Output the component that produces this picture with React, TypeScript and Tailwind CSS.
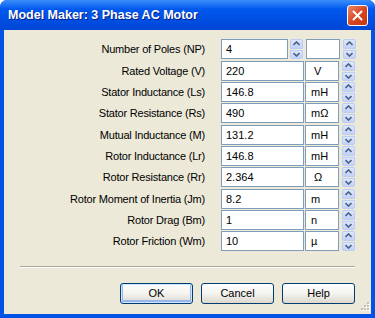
import React from "react";

const FONT = { fontFamily: '"Liberation Sans", Arial, sans-serif' };

function Arrow({ up }: { up: boolean }) {
  return (
    <svg width="7" height="5" viewBox="0 0 7 5" className="block">
      {up ? (
        <path d="M0.5 4 L3.5 1 L6.5 4" fill="none" stroke="#4d6185" strokeWidth="1.6" />
      ) : (
        <path d="M0.5 1 L3.5 4 L6.5 1" fill="none" stroke="#4d6185" strokeWidth="1.6" />
      )}
    </svg>
  );
}

function Spinner() {
  return (
    <div className="flex h-[20px] w-[13px] flex-col gap-[1px]">
      <div className="flex flex-1 items-center justify-center rounded-t-[2px] border border-[#bccdf5] bg-gradient-to-b from-[#dde7fd] to-[#c1d2f8]">
        <Arrow up />
      </div>
      <div className="flex flex-1 items-center justify-center rounded-b-[2px] border border-[#bccdf5] bg-gradient-to-b from-[#dde7fd] to-[#c1d2f8]">
        <Arrow up={false} />
      </div>
    </div>
  );
}

type Row = { label: string; value: string; unit: string; mt: string };

const rows: Row[] = [
  { label: "Number of Poles (NP)", value: "4", unit: "", mt: "mt-0" },
  { label: "Rated Voltage (V)", value: "220", unit: "\u00a0V", mt: "mt-[2px]" },
  { label: "Stator Inductance (Ls)", value: "146.8", unit: "mH", mt: "mt-[1px]" },
  { label: "Stator Resistance (Rs)", value: "490", unit: "m\u03a9", mt: "mt-[1px]" },
  { label: "Mutual Inductance (M)", value: "131.2", unit: "mH", mt: "mt-[2px]" },
  { label: "Rotor Inductance (Lr)", value: "146.8", unit: "mH", mt: "mt-[1px]" },
  { label: "Rotor Resistance (Rr)", value: "2.364", unit: "\u00a0\u03a9", mt: "mt-[1px]" },
  { label: "Rotor Moment of Inertia (Jm)", value: "8.2", unit: "m", mt: "mt-[2px]" },
  { label: "Rotor Drag (Bm)", value: "1", unit: "n", mt: "mt-[1px]" },
  { label: "Rotor Friction (Wm)", value: "10", unit: "\u00b5", mt: "mt-[1px]" },
];

function Field({ children, className }: { children?: React.ReactNode; className: string }) {
  return (
    <div className={`flex h-[20px] items-center border border-[#7f9db9] bg-white text-[11px] text-black ${className}`}>
      {children}
    </div>
  );
}

function Btn({ label, def }: { label: string; def?: boolean }) {
  return (
    <div
      className={`flex h-[21px] w-[73px] items-center justify-center rounded-[3px] border border-[#003c74] bg-gradient-to-b from-[#ffffff] via-[#f3f3ef] to-[#dcd8cc] text-[11px] text-black ${
        def ? "shadow-[inset_0_0_0_1px_#cee7ff,inset_0_-1px_0_2px_#98b4ee]" : ""
      }`}
    >
      {label}
    </div>
  );
}

export default function App() {
  return (
    <div className="h-[318px] w-[375px] overflow-hidden bg-white" style={FONT}>
      <div className="flex h-[318px] w-[375px] flex-col rounded-t-[7px] bg-[#0053e4]">
        {/* title bar */}
        <div className="flex h-[30px] items-center rounded-t-[7px] bg-gradient-to-b from-[#3a8efc] via-[#0058ee] via-30% to-[#0046d6] pl-[8px] pr-[7px]">
          <div
            className="flex-1 pt-[1px] text-[12.5px] font-bold text-white"
            style={{ textShadow: "1px 1px 0 #0a1e84" }}
          >
            Model Maker: 3 Phase AC Motor
          </div>
          <div className="flex h-[21px] w-[21px] items-center justify-center rounded-[3px] border border-white bg-gradient-to-br from-[#e8876b] via-[#d9451e] to-[#c23613]">
            <svg width="11" height="11" viewBox="0 0 11 11">
              <path d="M1.5 1.5 L9.5 9.5 M9.5 1.5 L1.5 9.5" stroke="white" strokeWidth="2" strokeLinecap="round" />
            </svg>
          </div>
        </div>
        {/* body */}
        <div className="relative mx-[4px] mb-[4px] flex flex-1 flex-col bg-[#ece9d8] pt-[9px]">
          {rows.map((r, i) => (
            <div key={r.label} className={`flex h-[20px] items-center ${r.mt}`}>
              <div className="w-[201px] text-right text-[11px] tracking-[-0.2px] text-black">{r.label}</div>
              <div className="ml-[16px] flex items-center">
                {i === 0 ? (
                  <>
                    <Field className="w-[67px] pl-[4px]">{r.value}</Field>
                    <div className="ml-[2px]">
                      <Spinner />
                    </div>
                    <Field className="ml-[3px] w-[34px]" />
                  </>
                ) : (
                  <>
                    <Field className="w-[83px] pl-[4px]">{r.value}</Field>
                    <Field className="ml-[1px] w-[34px] pl-[5px]">{r.unit}</Field>
                  </>
                )}
                <div className="ml-[3px]">
                  <Spinner />
                </div>
              </div>
            </div>
          ))}
          <div className="mx-[16px] mt-[15px] h-[2px] border-t border-[#aca899] border-b border-b-white" />
          <div className="mt-[15px] flex justify-end gap-[8px] pr-[16px]">
            <Btn label="OK" def />
            <Btn label="Cancel" />
            <Btn label="Help" />
          </div>
          <svg className="absolute bottom-[1px] right-[1px]" width="12" height="12" viewBox="0 0 12 12">
            {[
              [9, 1],
              [6, 4],
              [9, 4],
              [3, 7],
              [6, 7],
              [9, 7],
            ].map(([x, y]) => (
              <g key={`${x}-${y}`}>
                <rect x={x + 1} y={y + 1} width="2" height="2" fill="#ffffff" />
                <rect x={x} y={y} width="2" height="2" fill="#c1bdb0" />
              </g>
            ))}
          </svg>
        </div>
      </div>
    </div>
  );
}
